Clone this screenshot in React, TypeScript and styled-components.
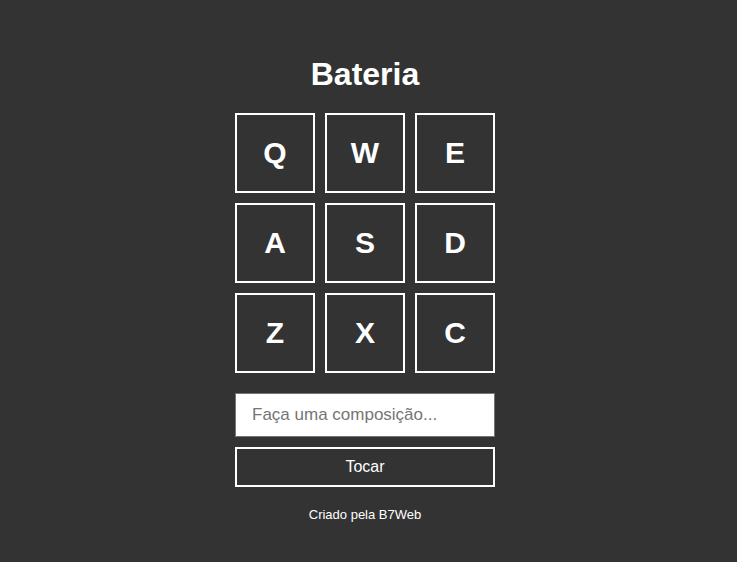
import React, { useState } from "react";
import styled, { createGlobalStyle } from "styled-components";

const GlobalStyle = createGlobalStyle`
  * {
    box-sizing: border-box;
  }

  body {
    margin: 0;
    background-color: #333;
    color: #fff;
    font-family: "Liberation Sans", Arial, Helvetica, sans-serif;
  }
`;

const Page = styled.main`
  display: flex;
  flex-direction: column;
  align-items: center;
  justify-content: center;
  min-height: 100vh;
  padding: 18px 7px 0 0;
`;

const Title = styled.h1`
  margin: 0 0 22px;
  font-size: 32px;
  line-height: 34px;
`;

const Keys = styled.div`
  display: grid;
  grid-template-columns: repeat(3, 80px);
  gap: 10px;
`;

const Key = styled.button<{ $active: boolean }>`
  height: 80px;
  padding: 0;
  border: 2px solid ${(p) => (p.$active ? "#ff0" : "#fff")};
  background: transparent;
  color: inherit;
  font: bold 30px "Liberation Sans", Arial, sans-serif;
  cursor: pointer;
`;

const Composer = styled.form`
  display: flex;
  flex-direction: column;
  gap: 10px;
  width: 260px;
  margin: 20px 0;
`;

const Composition = styled.input`
  height: 44px;
  padding: 0 16px;
  border: 1px solid #767676;
  background: #fff;
  color: #000;
  font: 17px "Liberation Sans", Arial, sans-serif;
  outline: 0;

  &::placeholder {
    color: #757575;
  }
`;

const PlayButton = styled.button`
  height: 40px;
  border: 2px solid #fff;
  background: transparent;
  color: inherit;
  font: 16px "Liberation Sans", Arial, sans-serif;
  cursor: pointer;
`;

const Credit = styled.footer`
  font-size: 13px;
  line-height: 16px;
`;

const letters = ["Q", "W", "E", "A", "S", "D", "Z", "X", "C"];

export default function App() {
  const [active, setActive] = useState("");
  const [text, setText] = useState("");

  const hit = (letter: string) => {
    setActive(letter);
    window.setTimeout(() => setActive(""), 300);
  };

  const play = (event: React.FormEvent) => {
    event.preventDefault();
    text
      .toUpperCase()
      .split("")
      .forEach((letter, i) => window.setTimeout(() => hit(letter), i * 250));
  };

  return (
    <>
      <GlobalStyle />
      <Page>
        <Title>Bateria</Title>
        <Keys>
          {letters.map((letter) => (
            <Key
              key={letter}
              type="button"
              $active={active === letter}
              onClick={() => hit(letter)}
            >
              {letter}
            </Key>
          ))}
        </Keys>
        <Composer onSubmit={play}>
          <Composition
            type="text"
            aria-label="Composição"
            placeholder="Faça uma composição..."
            value={text}
            onChange={(e) => setText(e.target.value)}
          />
          <PlayButton type="submit">Tocar</PlayButton>
        </Composer>
        <Credit>Criado pela B7Web</Credit>
      </Page>
    </>
  );
}
